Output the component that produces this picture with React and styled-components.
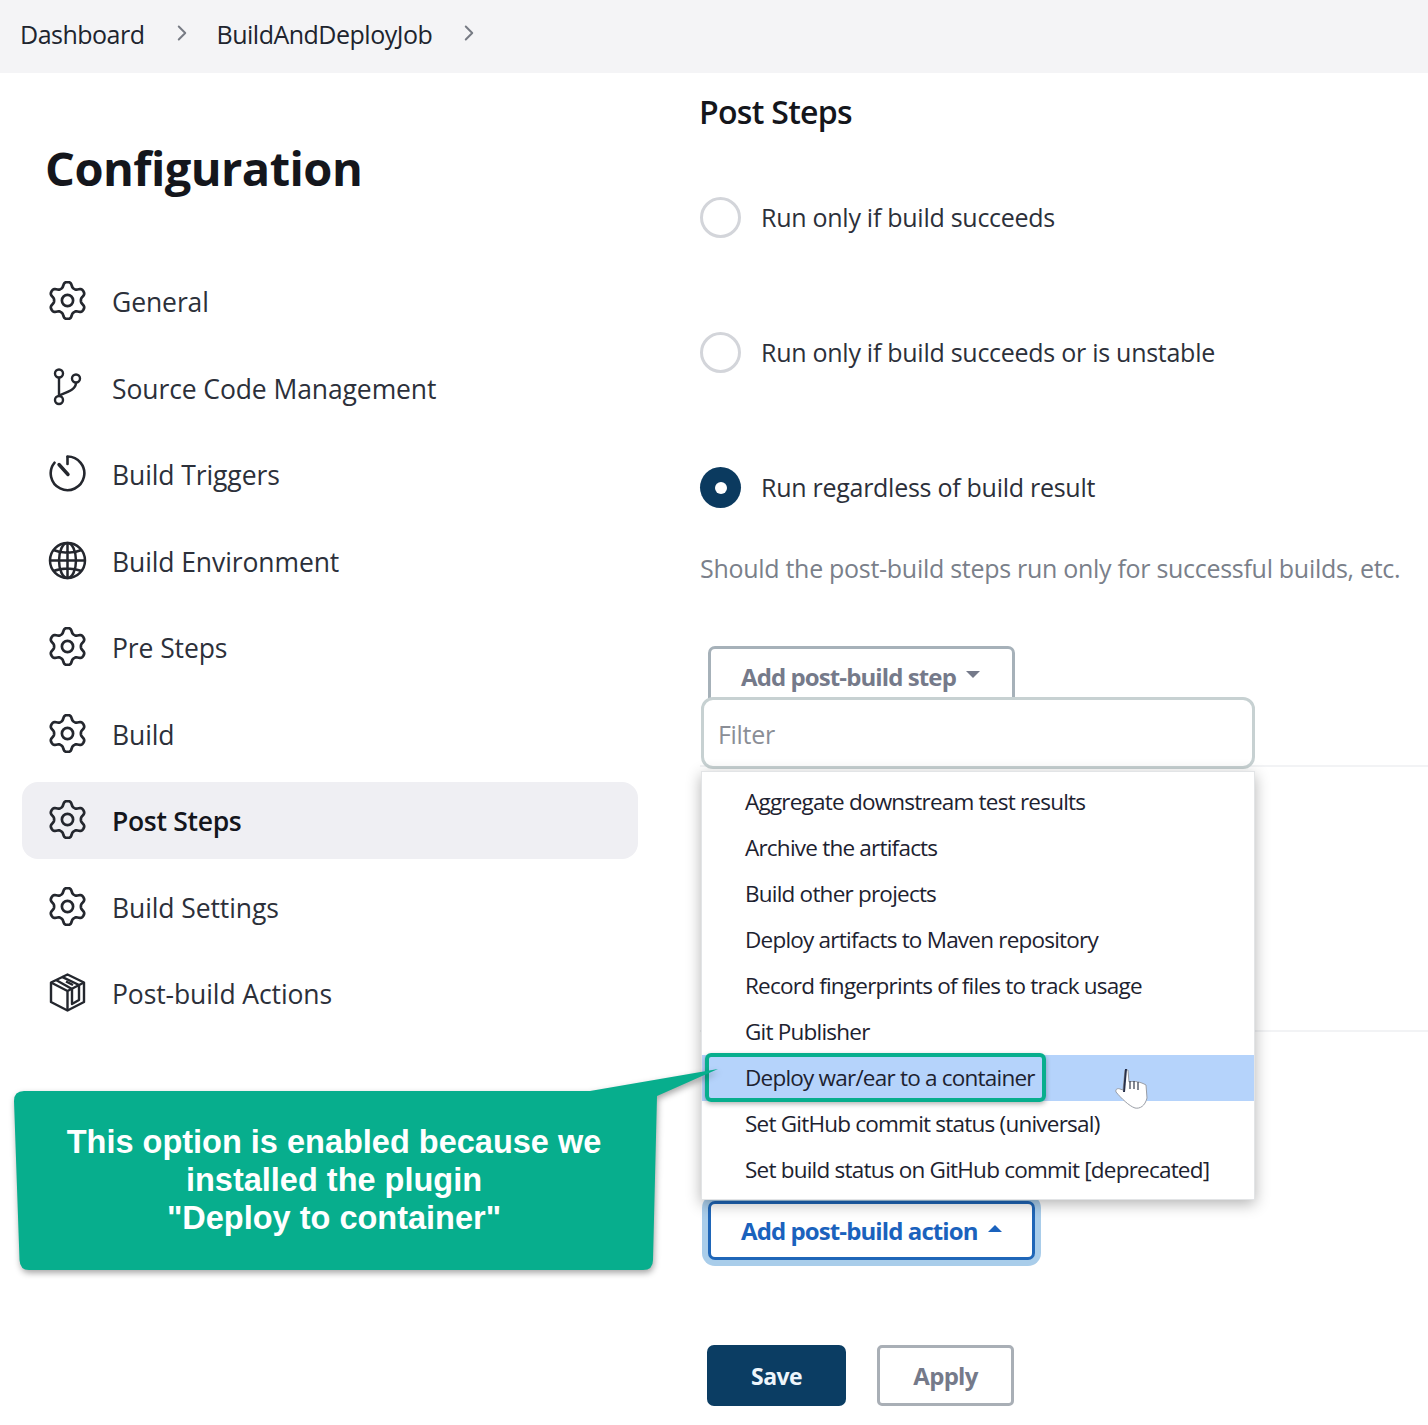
import React from "react";
import styled, { createGlobalStyle } from "styled-components";
import { ChevronRight } from "lucide-react";

const Global = createGlobalStyle`
  html, body { margin: 0; padding: 0; background: #fff; }
  body { font-family: "Open Sans", "Noto Sans", sans-serif; color: #1f2430; }
  * { box-sizing: border-box; }
`;

const Page = styled.div`position: relative; width: 1428px; height: 1425px; overflow: hidden;`;
const Breadcrumb = styled.header`
  height: 73px; background: #f4f4f6; display: flex; align-items: center; padding: 0 0 5px 20px;
`;
const Crumb = styled.span`font-size: 25px; letter-spacing: -0.5px; color: #20242e;`;
const CrumbSep = styled.span`display: flex; color: #777b84; margin: -2px 22px 0 24px;`;
const Columns = styled.div`display: flex;`;
const Sidebar = styled.aside`width: 700px; padding: 0 62px 0 22px; flex: none;`;
const Title = styled.h1`
  margin: 0; padding: 64px 0 0 23px; height: 189.5px; font-size: 47px; line-height: 62px; font-weight: 700;
  letter-spacing: -0.55px; color: #14161c;
`;
const NavList = styled.nav`display: flex; flex-direction: column; gap: 9.5px;`;
const NavItem = styled.div`
  height: 77px; display: flex; align-items: center; gap: 25px; padding-left: 26px; border-radius: 16px;
  background: ${(p) => (p.$active ? "#efeff3" : "transparent")};
  font-size: 26.5px; font-weight: ${(p) => (p.$active ? 600 : 400)};
  letter-spacing: ${(p) => (p.$active ? "-0.3px" : "-0.1px")}; color: ${(p) => (p.$active ? "#14161c" : "#2c303a")};
`;
const NavLabel = styled.span`margin-top: 2px;`;
const IconBox = styled.span`width: 39px; height: 39px; flex: none; display: flex; color: #24272e; margin-top: -1px;`;
const Main = styled.main`position: relative; flex: 1; padding-top: 19px;`;
const Heading = styled.h2`
  margin: 0 0 65px -1px; font-size: 32px; line-height: 40px; font-weight: 600; letter-spacing: -0.7px; color: #14161c;
`;
const RadioList = styled.div`display: flex; flex-direction: column; gap: 94px;`;
const RadioRow = styled.label`display: flex; align-items: center; gap: 20px; height: 41px;
  font-size: 25px; letter-spacing: -0.27px; color: #2c303a;`;
const RadioText = styled.span`margin-top: -2px;`;
const RadioDot = styled.span`
  width: 41px; height: 41px; border-radius: 50%; flex: none; display: flex; align-items: center; justify-content: center;
  background: ${(p) => (p.$checked ? "#0b3a5f" : "#fff")};
  border: ${(p) => (p.$checked ? "none" : "3px solid #d3d5da")};
  &::after { content: ""; width: 12px; height: 12px; border-radius: 50%; background: ${(p) => (p.$checked ? "#fff" : "transparent")}; }
`;
const Help = styled.p`
  margin: 45px 0 63px; height: 30px; font-size: 25px; line-height: 30px; letter-spacing: -0.29px; color: #7a7f8a; white-space: nowrap;
`;
const Caret = styled.span`
  display: inline-block; width: 0; height: 0; margin-left: 10px; border-left: 7px solid transparent; border-right: 7px solid transparent;
  ${(p) => (p.$up ? `border-bottom: 7px solid currentColor;` : `border-top: 7px solid currentColor;`)}
  position: relative; top: -2px;
`;
const OutlineButton = styled.button`
  display: flex; align-items: center; margin-left: 8px; font-family: inherit; background: #fff; font-size: 24px; font-weight: 700;
  letter-spacing: -0.9px; border-radius: 7px; padding: 0 0 0 30px;
`;
const StepButton = styled(OutlineButton)`
  width: 307px; height: 64px; padding-bottom: 4px; border: 3px solid #a6b1b9; color: #757a8a;
`;
const Divided = styled.div`
  margin-top: 55px; height: 267px; border-top: 2px solid #f2f3f5; border-bottom: 2px solid #f2f3f5;
`;
const ActionButton = styled(OutlineButton)`
  margin-top: 169px; width: 327px; height: 59px; border: 3px solid #1f66b8; color: #1a62bd;
  box-shadow: 0 0 0 6px #a9cdea;
`;
const ActionRow = styled.div`display: flex; gap: 31px; margin: 85px 0 0 7px;`;
const SaveButton = styled.button`
  width: 139px; height: 61px; border: 0; border-radius: 7px; background: #0b3d63; color: #eef5fa; font-family: inherit;
  font-size: 23px; font-weight: 700; letter-spacing: -0.6px;
`;
const ApplyButton = styled.button`
  width: 137px; height: 61px; border: 3px solid #a9afb6; border-radius: 5px; background: #fff; color: #757a8a; font-family: inherit;
  font-size: 24px; font-weight: 700; letter-spacing: -0.7px;
`;
const Dropdown = styled.div`position: absolute; left: 1px; top: 624px; width: 554px; z-index: 2;`;
const FilterBox = styled.div`
  height: 72px; border: 3px solid #c7d1d2; border-radius: 12px; background: #fff; display: flex; align-items: center; padding: 2px 0 0 14px;
  font-size: 25px; letter-spacing: -0.3px; color: #8a8e96;
`;
const Menu = styled.ul`
  list-style: none; margin: 2px 0 0; padding: 6px 0; background: #fff; border: 1px solid #e2e4e6;
  box-shadow: 0 4px 14px rgba(0,0,0,0.3);
`;
const MenuRow = styled.li`
  position: relative; height: 46.1px; display: flex; align-items: center; padding-left: 43px;
  font-size: 22.5px; letter-spacing: -0.78px; color: #1d2230; white-space: nowrap;
  background: ${(p) => (p.$hover ? "#b5d3fb" : "transparent")};
  ${(p) => p.$hover && `
    &::after {
      content: ""; position: absolute; left: 3px; top: -2px; box-sizing: border-box; width: 341px; height: 49px;
      border: 4px solid #07ae8d; border-radius: 6px; box-shadow: 0 2px 5px rgba(0,0,0,0.3);
    }
  `}
`;
const Pointer = styled.svg`position: absolute; left: 413px; top: 13px; width: 32px; height: 41px; overflow: visible;`;
const Callout = styled.div`
  position: absolute; left: 14px; top: 1091px; width: 640px; height: 179px; z-index: 3; color: #fff; padding-top: 32px;
  font-family: "Liberation Sans", Arial, sans-serif; font-size: 32.5px; line-height: 38px; font-weight: 700; text-align: center;
`;
const CalloutShape = styled.svg`
  position: absolute; left: 0; top: -30px; width: 720px; height: 215px; overflow: visible;
  filter: drop-shadow(1px 3px 3px rgba(0,0,0,0.35));
`;
const CalloutText = styled.div`position: relative;`;

const items = [
  ["General", "gear"], ["Source Code Management", "branch"], ["Build Triggers", "timer"], ["Build Environment", "globe"],
  ["Pre Steps", "gear"], ["Build", "gear"], ["Post Steps", "gear", true], ["Build Settings", "gear"], ["Post-build Actions", "box"],
];
const options = [
  "Aggregate downstream test results", "Archive the artifacts", "Build other projects", "Deploy artifacts to Maven repository",
  "Record fingerprints of files to track usage", "Git Publisher", "Deploy war/ear to a container",
  "Set GitHub commit status (universal)", "Set build status on GitHub commit [deprecated]",
];

const gearPath = (() => {
  const pts = [];
  for (let i = 0; i < 144; i++) {
    const phi = (i / 144) * Math.PI * 2;
    const wave = Math.tanh(1.5 * Math.cos(6 * phi)) / Math.tanh(1.5);
    const r = 15.9 + 2.5 * wave;
    pts.push(`${(19.5 + r * Math.sin(phi)).toFixed(2)} ${(19.5 - r * Math.cos(phi)).toFixed(2)}`);
  }
  return `M${pts.join("L")}Z`;
})();

function GearIcon() {
  return (
    <svg viewBox="0 0 39 39" width="39" height="39" fill="none" stroke="currentColor" strokeWidth="2.7" strokeLinejoin="round">
      <path d={gearPath} /><circle cx="19.5" cy="19.5" r="5.6" />
    </svg>
  );
}
function GlobeIcon() {
  return (
    <svg viewBox="0 0 39 39" width="39" height="39" fill="none" stroke="currentColor" strokeWidth="2.5">
      <circle cx="19.5" cy="19.500" r="17.500" /><ellipse cx="19.5" cy="19.5" rx="8.500" ry="17.500" />
      <path d="M19.5 2v35M2 19.500h35M5.500 9c8 3.500 20 3.500 28 0M5.500 30c8-3.500 20-3.500 28 0" />
    </svg>
  );
}
function BranchIcon() {
  return (
    <svg viewBox="0 0 39 39" width="39" height="39" fill="none" stroke="currentColor" strokeWidth="2.4">
      <circle cx="11" cy="5.500" r="4" /><circle cx="11" cy="32" r="4" /><circle cx="28" cy="10.500" r="4" />
      <path d="M11 9.500V28M28 14.500c0 7-7 9-17 13" />
    </svg>
  );
}
function TimerIcon() {
  return (
    <svg viewBox="0 0 39 39" width="39" height="39" fill="none" stroke="currentColor" strokeWidth="2.6" strokeLinecap="round">
      <path d="M19.5 2.500a16.800 16.800 0 1 1-13 6.200" /><path d="M19.5 3v7" />
      <path d="M11 10.500l9 10" strokeWidth="3.400" />
    </svg>
  );
}
function BoxIcon() {
  return (
    <svg viewBox="0 0 39 39" width="39" height="39" fill="none" stroke="currentColor" strokeWidth="2.400" strokeLinejoin="round">
      <path d="M19.5 1.500 36 9.500V29L19.5 37.500 3 29V9.500z" />
      <path d="M3 9.500 19.500 18 36 9.500M19.500 18v19.500" />
      <path d="M8 7l16 9v15l7-4V12L14 3.800" />
      <path d="M18 8.500l7 3.500" />
    </svg>
  );
}
function NavIcon({ kind }) {
  if (kind === "gear") return <GearIcon />;
  if (kind === "globe") return <GlobeIcon />;
  if (kind === "branch") return <BranchIcon />;
  if (kind === "timer") return <TimerIcon />;
  return <BoxIcon />;
}

export default function App() {
  return (
    <Page>
      <Global />
      <Breadcrumb>
        <Crumb>Dashboard</Crumb>
        <CrumbSep><ChevronRight size={26} strokeWidth={1.8} /></CrumbSep>
        <Crumb>BuildAndDeployJob</Crumb>
        <CrumbSep><ChevronRight size={26} strokeWidth={1.8} /></CrumbSep>
      </Breadcrumb>
      <Columns>
        <Sidebar>
          <Title>Configuration</Title>
          <NavList>
            {items.map(([label, kind, active]) => (
              <NavItem key={label} $active={active}>
                <IconBox><NavIcon kind={kind} /></IconBox>
                <NavLabel>{label}</NavLabel>
              </NavItem>
            ))}
          </NavList>
        </Sidebar>
        <Main>
          <Heading>Post Steps</Heading>
          <RadioList>
            <RadioRow><RadioDot /><RadioText>Run only if build succeeds</RadioText></RadioRow>
            <RadioRow><RadioDot /><RadioText>Run only if build succeeds or is unstable</RadioText></RadioRow>
            <RadioRow><RadioDot $checked /><RadioText>Run regardless of build result</RadioText></RadioRow>
          </RadioList>
          <Help>Should the post-build steps run only for successful builds, etc.</Help>
          <StepButton>Add post-build step<Caret /></StepButton>
          <Divided />
          <ActionButton>Add post-build action<Caret $up /></ActionButton>
          <ActionRow>
            <SaveButton>Save</SaveButton>
            <ApplyButton>Apply</ApplyButton>
          </ActionRow>
          <Dropdown>
            <FilterBox>Filter</FilterBox>
            <Menu>
              {options.map((o, i) => (
                <MenuRow key={o} $hover={i === 6}>
                  {o}
                  {i === 6 && (
                    <Pointer viewBox="0 0 32 41">
                      <path d="M8 22 10 2h3l1 12c5-1.500 12 0 17 3l1 13c-2 8-7 11-12 10C14 38 6 30 1 24c-1-3 2-4 4-3z" fill="#fff" stroke="#9a9ea6" strokeWidth="1" />
                      <path d="M11 1 9 24" stroke="#27304a" strokeWidth="2" fill="none" />
                      <path d="M15 13v8M19 13v8M23 14v8" stroke="#333a4c" strokeWidth="1.200" fill="none" />
                    </Pointer>
                  )}
                </MenuRow>
              ))}
            </Menu>
          </Dropdown>
        </Main>
      </Columns>
      <Callout>
        <CalloutShape viewBox="0 0 720 215">
          <path d="M10 30H576L704 8 643 35 639 199Q639 209 629 209H15Q6 209 5.500 199L0 40Q0 30 10 30Z" fill="#07ae8d" />
        </CalloutShape>
        <CalloutText>This option is enabled because we<br />installed the plugin<br />"Deploy to container"</CalloutText>
      </Callout>
    </Page>
  );
}
